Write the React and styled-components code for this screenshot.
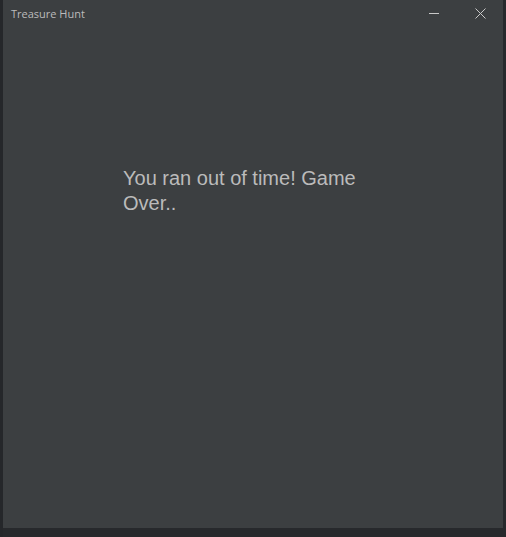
import React from 'react';
import styled, { createGlobalStyle } from 'styled-components';

const Global = createGlobalStyle`
  html, body {
    margin: 0;
    padding: 0;
    background: #27292c;
    height: 100%;
  }
  #root {
    height: 100%;
  }
`;

const Desktop = styled.div`
  display: flex;
  height: 537px;
  background: #27292c;
`;

const Edge = styled.div`
  width: 3px;
  background: #25272a;
`;

const Window = styled.div`
  width: 500px;
  height: 528px;
  background: #3c3f41;
  display: flex;
  flex-direction: column;
`;

const TitleBar = styled.div`
  height: 30px;
  display: flex;
  align-items: flex-start;
  justify-content: space-between;
`;

const Title = styled.span`
  font-family: "Open Sans", "Noto Sans", sans-serif;
  font-size: 11px;
  color: #bbbbbb;
  padding: 6px 0 0 8px;
`;

const Controls = styled.div`
  display: flex;
`;

const CtrlButton = styled.div`
  width: 46px;
  height: 26px;
  display: flex;
  align-items: center;
  justify-content: center;
`;

const Content = styled.div`
  flex: 1;
  padding: 136px 0 0 120px;
`;

const Message = styled.p`
  margin: 0;
  width: 250px;
  font-family: "Liberation Sans", Arial, sans-serif;
  font-size: 20px;
  line-height: 25px;
  color: #bbbbbb;
`;

export default function App() {
  return (
    <>
      <Global />
      <Desktop>
        <Edge />
        <Window>
          <TitleBar>
            <Title>Treasure Hunt</Title>
            <Controls>
              <CtrlButton>
                <svg width="10" height="10" viewBox="0 0 10 10">
                  <line x1="0" y1="5.5" x2="10" y2="5.5" stroke="#c8c8c8" strokeWidth="1" />
                </svg>
              </CtrlButton>
              <CtrlButton>
                <svg width="11" height="11" viewBox="0 0 11 11">
                  <path d="M0.5 0.5 L10.5 10.5 M10.5 0.5 L0.5 10.5" stroke="#c8c8c8" strokeWidth="1" />
                </svg>
              </CtrlButton>
            </Controls>
          </TitleBar>
          <Content>
            <Message>You ran out of time! Game Over..</Message>
          </Content>
        </Window>
      </Desktop>
    </>
  );
}
